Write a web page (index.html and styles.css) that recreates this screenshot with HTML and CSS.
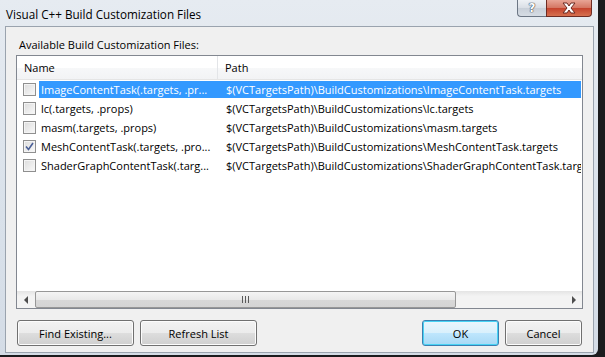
FILE: index.html
```html
<!DOCTYPE html>
<html lang="en">

<head>
    <meta charset="UTF-8">
    <title>Visual C++ Build Customization Files</title>
    <link rel="stylesheet" href="styles.css">
</head>

<body>
<div class="window">
    <div class="titlebar">
        <span class="title">Visual C++ Build Customization Files</span>
        <div class="caption-buttons">
            <span class="cap help">?</span>
            <span class="cap close">
                <svg width="16" height="12" viewBox="0 0 16 12">
                    <path d="M2 1h4l2 3 2-3h4l-4 5 4 5h-4l-2-3-2 3H2l4-5z" fill="#fff" stroke="#6b2a22" stroke-width="1"/>
                </svg>
            </span>
        </div>
    </div>

    <div class="client">
        <div class="label">Available Build Customization Files:</div>

        <div class="listview">
            <div class="lv-header">
                <div class="col col-name">Name</div>
                <div class="col col-path">Path</div>
            </div>

            <div class="lv-body">
                <div class="row selected">
                    <span class="check"></span>
                    <span class="cells">
                        <span class="cell name">ImageContentTask(.targets, .pr...</span>
                        <span class="cell path">$(VCTargetsPath)\BuildCustomizations\ImageContentTask.targets</span>
                    </span>
                </div>
                <div class="row">
                    <span class="check"></span>
                    <span class="cells">
                        <span class="cell name">lc(.targets, .props)</span>
                        <span class="cell path">$(VCTargetsPath)\BuildCustomizations\lc.targets</span>
                    </span>
                </div>
                <div class="row">
                    <span class="check"></span>
                    <span class="cells">
                        <span class="cell name">masm(.targets, .props)</span>
                        <span class="cell path">$(VCTargetsPath)\BuildCustomizations\masm.targets</span>
                    </span>
                </div>
                <div class="row">
                    <span class="check checked">
                        <svg width="9" height="9" viewBox="0 0 9 9">
                            <path d="M1 4.5l2.5 3L8 1" fill="none" stroke="#4a5f97" stroke-width="1.6"/>
                        </svg>
                    </span>
                    <span class="cells">
                        <span class="cell name">MeshContentTask(.targets, .pro...</span>
                        <span class="cell path">$(VCTargetsPath)\BuildCustomizations\MeshContentTask.targets</span>
                    </span>
                </div>
                <div class="row">
                    <span class="check"></span>
                    <span class="cells">
                        <span class="cell name">ShaderGraphContentTask(.targ...</span>
                        <span class="cell path">$(VCTargetsPath)\BuildCustomizations\ShaderGraphContentTask.targets</span>
                    </span>
                </div>
            </div>

            <div class="hscroll">
                <span class="arrow left"></span>
                <span class="track">
                    <span class="thumb"><span class="grip"></span></span>
                </span>
                <span class="arrow right"></span>
            </div>
        </div>

        <div class="buttons">
            <button class="btn wide">Find Existing...</button>
            <button class="btn wide">Refresh List</button>
            <span class="spacer"></span>
            <button class="btn default">OK</button>
            <button class="btn">Cancel</button>
        </div>
    </div>
</div>
</body>

</html>
```

FILE: styles.css
```css
body {
    margin: 0;
    width: 605px;
    height: 357px;
    overflow: hidden;
    background: #1b1b1d;
    font-family: 'Open Sans', 'Noto Sans', Arial, sans-serif;
    font-size: 11px;
    color: #000;
}

.window {
    width: 598px;
    height: 355px;
    display: flex;
    flex-direction: column;
    background: linear-gradient(#e6ebf1, #d9e1ea 60%, #d4dce6);
    border-bottom-right-radius: 6px;
}

/* title bar */
.titlebar {
    height: 26px;
    display: flex;
    align-items: flex-start;
    flex-shrink: 0;
}

.title {
    font-size: 11.7px;
    margin: 6px 0 0 6px;
    line-height: 16px;
    color: #000;
}

.caption-buttons {
    margin-left: auto;
    margin-right: 6px;
    display: flex;
}

.cap {
    height: 17px;
    display: flex;
    align-items: center;
    justify-content: center;
    box-sizing: border-box;
    border: 1px solid #6c7684;
    border-top: 0;
}

.help {
    width: 29px;
    border-right: 0;
    border-bottom-left-radius: 4px;
    background: linear-gradient(#eef1f5, #d9dee5 50%, #c8cfd8 51%, #d6dce4);
    color: #fff;
    font-family: 'DejaVu Sans', sans-serif;
    font-weight: bold;
    font-size: 12px;
    text-shadow: 0 0 1px #3a4250, 0 0 1px #3a4250, 0 0 1px #3a4250;
}

.close {
    width: 46px;
    border-color: #6e2b22;
    border-bottom-right-radius: 4px;
    background: linear-gradient(#e8a596, #d47561 50%, #c5422c 51%, #d6704f);
}

/* client area */
.client {
    margin-left: 5px;
    width: 589px;
    height: 327px;
    box-sizing: border-box;
    border: 1px solid #9aa3ae;
    background: #f0f0f0;
    padding: 10px 10px 6px;
    display: flex;
    flex-direction: column;
}

.label {
    line-height: 16px;
    padding-left: 3px;
    margin-bottom: 2px;
}

/* list view */
.listview {
    height: 254px;
    box-sizing: border-box;
    border: 1px solid #828790;
    background: #fff;
    display: flex;
    flex-direction: column;
}

.lv-header {
    height: 24px;
    display: flex;
    flex-shrink: 0;
    background: linear-gradient(#fff, #fff 50%, #f7f8f9 51%, #f2f3f5);
    border-bottom: 1px solid #e5e5e5;
    box-sizing: border-box;
}

.col {
    line-height: 23px;
    padding-left: 7px;
    box-sizing: border-box;
}

.col-name {
    width: 201px;
    border-right: 1px solid #e3e5e8;
}

.lv-body {
    flex: 1;
    overflow: hidden;
}

.row {
    height: 19px;
    display: flex;
    align-items: center;
    white-space: nowrap;
}

.check {
    width: 13px;
    height: 13px;
    margin: 0 3px 0 6px;
    box-sizing: border-box;
    border: 1px solid #8f8f8f;
    background: linear-gradient(135deg, #dcdcdc, #f9f9f9);
    box-shadow: inset 0 0 0 1px #f4f4f4;
    display: flex;
    align-items: center;
    justify-content: center;
    flex-shrink: 0;
}

.cells {
    display: flex;
    height: 17px;
    line-height: 17px;
    overflow: hidden;
}

.cell {
    overflow: hidden;
}

.cell.name {
    width: 182px;
    padding-left: 2px;
    box-sizing: border-box;
}

.cell.path {
    width: 360px;
    padding-left: 5px;
    box-sizing: border-box;
}

.selected .cells {
    background: #3399ff;
    color: #fff;
}

/* horizontal scroll bar */
.hscroll {
    height: 17px;
    display: flex;
    flex-shrink: 0;
    background: linear-gradient(#e4e4e4, #f3f3f3 30%, #f3f3f3);
}

.arrow {
    width: 17px;
    display: flex;
    align-items: center;
    justify-content: center;
}

.arrow::before {
    content: '';
    border: 4px solid transparent;
}

.arrow.left::before {
    border-right: 4px solid #4d4d4d;
    margin-left: -4px;
}

.arrow.right::before {
    border-left: 4px solid #4d4d4d;
    margin-right: -4px;
}

.track {
    flex: 1;
    display: flex;
    padding: 0 1px;
}

.thumb {
    width: 421px;
    box-sizing: border-box;
    border: 1px solid #979797;
    border-radius: 2px;
    background: linear-gradient(#f4f4f4, #e9e9e9 50%, #d8d8d8 51%, #d4d4d4);
    display: flex;
    align-items: center;
    justify-content: center;
}

.grip {
    width: 7px;
    height: 7px;
    background: repeating-linear-gradient(90deg, #5a5a5a 0 1px, transparent 1px 3px);
}

/* buttons */
.buttons {
    display: flex;
    gap: 6px;
    margin-top: 11px;
    padding: 0 1px;
}

.spacer {
    flex: 1;
}

.btn {
    width: 77px;
    height: 26px;
    font-family: inherit;
    font-size: 11px;
    color: #000;
    border: 1px solid #707070;
    border-radius: 3px;
    background: linear-gradient(#f2f2f2, #ebebeb 50%, #dddddd 51%, #cfcfcf);
    box-shadow: inset 0 0 0 1px #fcfcfc;
    padding: 0;
}

.btn.wide {
    width: 117px;
}

.btn.default {
    border-color: #3c7fb1;
    box-shadow: inset 0 0 0 1px #48d3f4;
    background: linear-gradient(#eaf6fd, #d9f0fc 50%, #bee6fd 51%, #a7d9f5);
}
```
